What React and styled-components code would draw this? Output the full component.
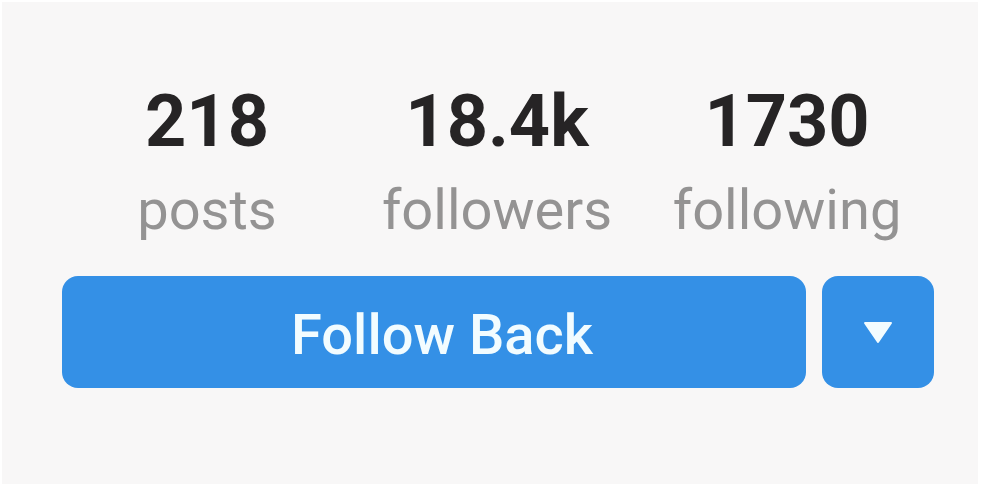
import React from "react";
import styled, { createGlobalStyle } from "styled-components";

const GlobalStyle = createGlobalStyle`
  * {
    box-sizing: border-box;
  }
  body {
    margin: 0;
    background-color: #ffffff;
    font-family: Roboto, "Liberation Sans", sans-serif;
  }
`;

const ProfilePanel = styled.main`
  min-height: calc(100vh - 6px);
  margin: 2px 6px 4px 2px;
  padding: 80px 44px 92px 60px;
  background-color: #f8f7f7;
`;

const StatList = styled.ul`
  display: grid;
  grid-template-columns: repeat(3, 1fr);
  margin: 0;
  padding: 0 2px 0 0;
  list-style: none;
`;

const Stat = styled.li`
  display: flex;
  flex-direction: column;
  align-items: center;
`;

const StatValue = styled.strong`
  color: #262425;
  font-size: 72px;
  font-weight: 700;
  line-height: 80px;
`;

const StatLabel = styled.span`
  color: #949393;
  font-size: 56px;
  line-height: 96px;
`;

const Actions = styled.div`
  display: flex;
  gap: 16px;
  margin-top: 18px;
`;

const Button = styled.button`
  display: flex;
  flex: ${(props) => (props.$wide ? "1" : "0 0 112px")};
  align-items: center;
  justify-content: center;
  height: 112px;
  padding: ${(props) => (props.$wide ? "6px 0 0 16px" : "0")};
  border: 0;
  border-radius: 16px;
  background-color: #3490e6;
  color: #f2fcff;
  font-family: inherit;
  font-size: 56px;
  font-weight: 500;
  cursor: pointer;
`;

const stats = [
  { value: "218", label: "posts" },
  { value: "18.4k", label: "followers" },
  { value: "1730", label: "following" },
];

const App = () => {
  return (
    <>
      <GlobalStyle />
      <ProfilePanel>
        <StatList>
          {stats.map((stat) => (
            <Stat key={stat.label}>
              <StatValue>{stat.value}</StatValue>
              <StatLabel>{stat.label}</StatLabel>
            </Stat>
          ))}
        </StatList>
        <Actions>
          <Button type="button" $wide>
            Follow Back
          </Button>
          <Button type="button" aria-label="More options">
            <svg width="32" height="24" viewBox="0 0 32 24" aria-hidden="true">
              <path
                d="M3 3H29L16 22Z"
                fill="currentColor"
                stroke="currentColor"
                strokeWidth="2"
                strokeLinejoin="round"
              />
            </svg>
          </Button>
        </Actions>
      </ProfilePanel>
    </>
  );
};

export default App;
